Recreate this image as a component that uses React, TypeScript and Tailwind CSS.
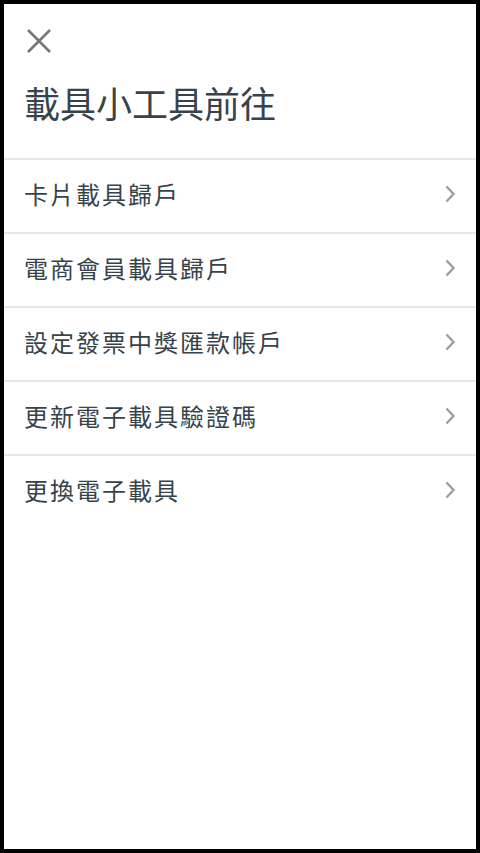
import React from "react";

const items = [
  "卡片載具歸戶",
  "電商會員載具歸戶",
  "設定發票中獎匯款帳戶",
  "更新電子載具驗證碼",
  "更換電子載具",
];

export default function App() {
  return (
    <div
      className="w-full h-[853px] bg-black p-[4px]"
      style={{ fontFamily: '"Noto Sans CJK TC", "Noto Sans", sans-serif' }}
    >
      <div className="w-full h-full bg-white flex flex-col">
        <div className="pl-[23px] pt-[25px]">
          <svg width="24" height="24" viewBox="0 0 24 24" className="block">
            <path d="M1 1L23 23M23 1L1 23" stroke="#767676" strokeWidth="2.6" fill="none" />
          </svg>
        </div>
        <h1 className="pl-[20px] mt-[31px] text-[36px] leading-[36px] text-[#37434a] font-normal">
          載具小工具前往
        </h1>
        <div className="mt-[38px]">
          {items.map((t) => (
            <div
              key={t}
              className="h-[74px] border-t-2 border-[#e6e6e6] flex items-center justify-between pl-[20px] pr-[20px]"
            >
              <span className="text-[24px] tracking-[2px] text-[#37434a] leading-none pb-[4px]">{t}</span>
              <svg width="12" height="18" viewBox="0 0 12 18" className="block mb-[4px]">
                <path d="M2.5 1.5L9.5 9L2.5 16.5" stroke="#9e9e9e" strokeWidth="2.4" fill="none" />
              </svg>
            </div>
          ))}
        </div>
      </div>
    </div>
  );
}
